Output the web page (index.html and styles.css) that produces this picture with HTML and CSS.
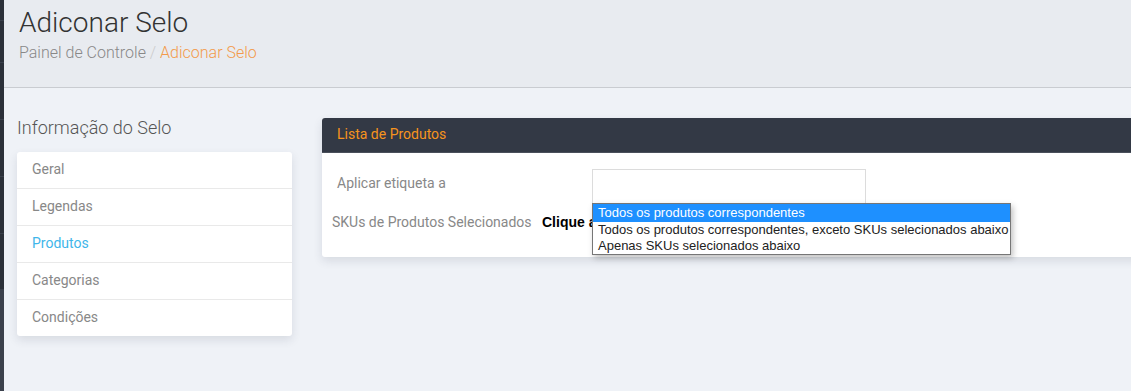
FILE: index.html
```html
<!DOCTYPE html>
<html lang="pt-BR">
    <head>
        <meta charset="UTF-8">
        <meta name="viewport" content="width=device-width, initial-scale=1.0">
        <title>Adiconar Selo</title>
        <link rel="stylesheet" href="styles.css">
    </head>

    <body>
        <aside class="rail">
            <div class="rail-item r1"></div>
            <div class="rail-item r2"></div>
            <div class="rail-item"></div>
            <div class="rail-item"></div>
            <div class="rail-item"></div>
            <div class="rail-item r6"></div>
            <div class="rail-foot"></div>
        </aside>

        <main class="content">
            <header class="page-head">
                <h1>Adiconar Selo</h1>
                <div class="crumbs">
                    <span>Painel de Controle</span>
                    <span class="sep">/</span>
                    <span class="current">Adiconar Selo</span>
                </div>
            </header>

            <div class="page-body">
                <section class="side">
                    <h2>Informação do Selo</h2>
                    <ul class="menu">
                        <li>Geral</li>
                        <li>Legendas</li>
                        <li class="active">Produtos</li>
                        <li>Categorias</li>
                        <li>Condições</li>
                    </ul>
                </section>

                <section class="panel">
                    <div class="panel-head">Lista de Produtos</div>
                    <div class="panel-body">
                        <div class="row first">
                            <label class="lbl">Aplicar etiqueta a</label>
                            <div class="select-wrap">
                                <div class="fake-select"></div>
                                <ul class="dropdown">
                                    <li class="hl">Todos os produtos correspondentes</li>
                                    <li>Todos os produtos correspondentes, exceto SKUs selecionados abaixo</li>
                                    <li>Apenas SKUs selecionados abaixo</li>
                                </ul>
                            </div>
                        </div>
                        <div class="row second">
                            <label class="lbl">SKUs de Produtos Selecionados</label>
                            <b class="click">Clique aqui</b>
                        </div>
                    </div>
                </section>
            </div>
        </main>
    </body>
</html>
```

FILE: styles.css
```css
* {
    box-sizing: border-box;
}

html, body {
    margin: 0;
    height: 100%;
}

body {
    display: flex;
    overflow: hidden;
    background: #eff2f7;
    font-family: 'Roboto', 'Liberation Sans', sans-serif;
    color: #333;
}

.rail {
    width: 4px;
    flex: none;
    background: #2b3039;
    display: flex;
    flex-direction: column;
}

.rail-item {
    height: 57px;
    border-bottom: 1px solid #3a404b;
}
.rail-item.r1 { height: 21px; }
.rail-item.r2 { height: 42px; }
.rail-item.r6 { height: 56px; }

.rail-foot {
    flex: 1;
    background: #3b414c;
}

.content {
    flex: 1;
    min-width: 0;
}

.page-head {
    height: 88px;
    background: #e8ebf0;
    border-bottom: 1px solid #c9ccd1;
    padding: 5px 15px 0;
}

.page-head h1 {
    margin: 0;
    font-size: 28px;
    font-weight: 300;
    color: #333;
    line-height: 36px;
}

.crumbs {
    font-size: 16px;
    font-weight: 300;
    color: #888;
    line-height: 22px;
    margin-top: 1px;
}

.crumbs .sep {
    color: #ccc;
}

.crumbs .current {
    color: #f39a4a;
}

.page-body {
    display: flex;
    gap: 30px;
    padding: 29px 0 0 13px;
}

.side {
    width: 275px;
    flex: none;
}

.side h2 {
    margin: 0 0 13px;
    font-size: 18px;
    font-weight: 300;
    color: #555;
    line-height: 22px;
}

.menu {
    list-style: none;
    margin: 0;
    padding: 0;
    background: #fff;
    border-radius: 3px;
    box-shadow: 0 4px 10px rgba(40, 50, 70, 0.12);
}

.menu li {
    height: 37px;
    line-height: 34px;
    padding-left: 15px;
    font-size: 14px;
    color: #888;
    border-top: 1px solid #e9e9e9;
}

.menu li:first-child {
    border-top: none;
    height: 36px;
}

.menu li.active {
    color: #3fb6ea;
}

.panel {
    width: 830px;
    flex: none;
    margin-top: 1px;
    background: #fff;
    border-radius: 3px;
    box-shadow: 0 4px 10px rgba(40, 50, 70, 0.12);
    align-self: flex-start;
}

.panel-head {
    height: 35px;
    line-height: 33px;
    background: #333945;
    border-bottom: 1px solid #4a505b;
    border-radius: 3px 3px 0 0;
    padding-left: 15px;
    font-size: 14px;
    color: #f7941d;
}

.panel-body {
    padding: 16px 0 17px;
}

.row {
    display: flex;
    align-items: center;
}

.lbl {
    font-size: 14px;
    color: #888;
    line-height: 20px;
}

.row.first {
    height: 35px;
    align-items: flex-start;
}

.row.first .lbl {
    width: 270px;
    padding: 4px 0 0 15px;
}

.row.second {
    height: 36px;
    padding-left: 10px;
}

.row.second .lbl {
    width: 210px;
}

/* the open dropdown hides the rest of this link */
.click {
    width: 50px;
    overflow: hidden;
    white-space: nowrap;
    font-family: 'Liberation Sans', Arial, sans-serif;
    font-size: 14px;
    color: #000;
}

.select-wrap {
    position: relative;
}

.fake-select {
    width: 274px;
    height: 35px;
    border: 1px solid #dcdcdc;
    background: #fff;
}

.dropdown {
    position: absolute;
    left: 0;
    top: 34px;
    z-index: 2;
    margin: 0;
    padding: 0;
    list-style: none;
    width: 419px;
    background: #fff;
    border: 1px solid #767676;
    box-shadow: 2px 3px 6px rgba(0, 0, 0, 0.25);
    font-family: 'Liberation Sans', Arial, sans-serif;
    font-size: 13px;
    color: #222;
}

.dropdown li {
    height: 16px;
    line-height: 16px;
    padding: 0 5px;
    white-space: nowrap;
}

.dropdown li.hl {
    height: 18px;
    line-height: 18px;
    background: #1e90ff;
    color: #fff;
}
```
